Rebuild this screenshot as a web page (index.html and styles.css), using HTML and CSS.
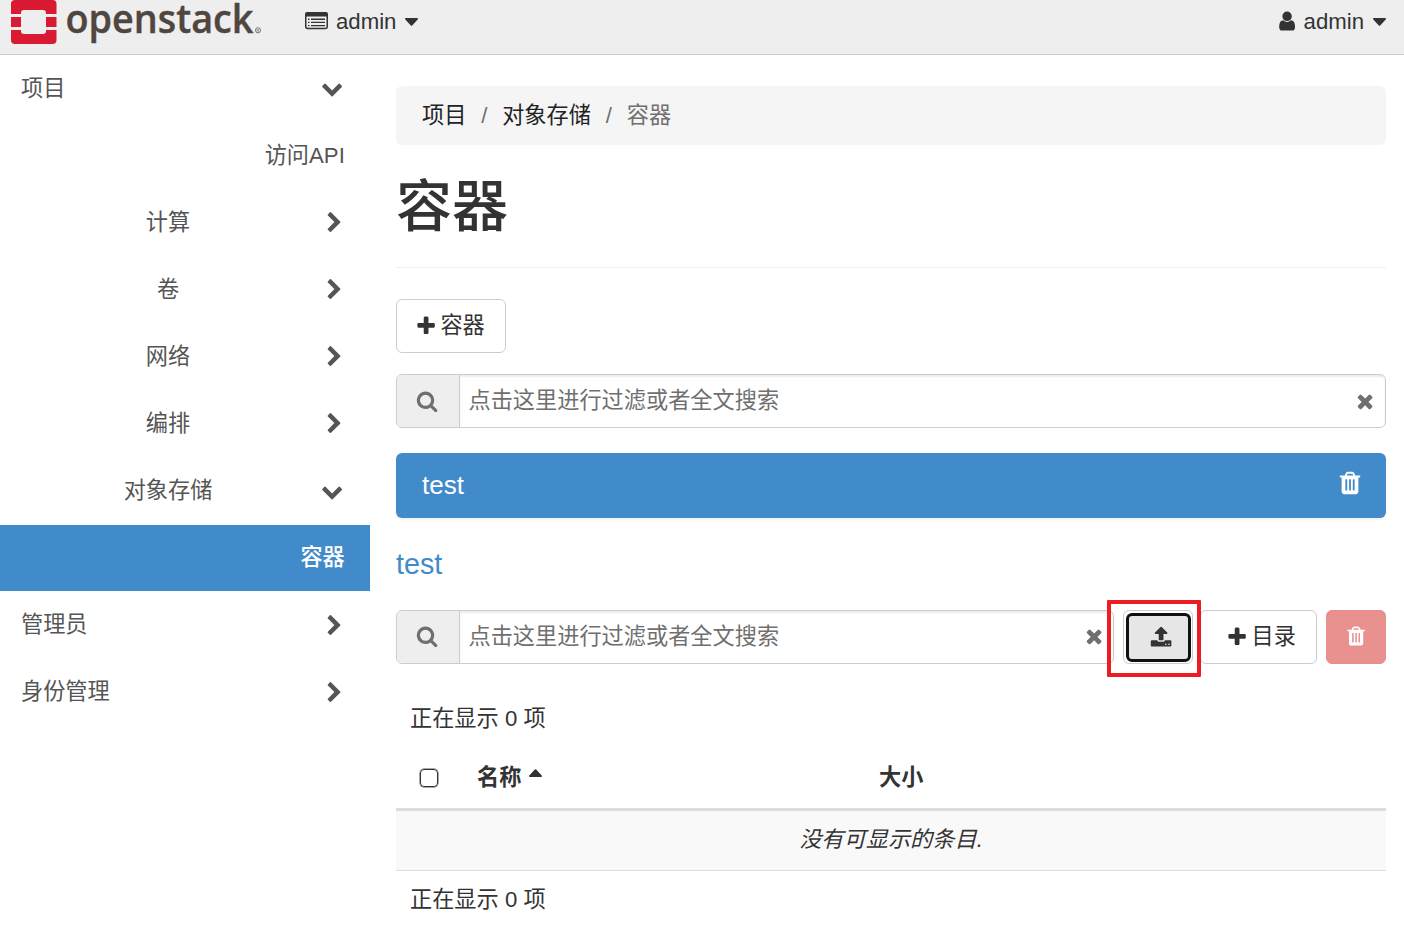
FILE: index.html
```html
<!DOCTYPE html>
<html lang="zh-CN">
<head>
<meta charset="utf-8">
<title>容器 - OpenStack Dashboard</title>
<link rel="stylesheet" href="styles.css">
</head>
<body>
<svg class="defs" width="0" height="0">
  <symbol id="search" viewBox="0 0 1792 1792"><path d="M1216 832q0-185-131.500-316.500t-316.500-131.500-316.500 131.500-131.500 316.500 131.500 316.500 316.500 131.500 316.500-131.500 131.500-316.500zm512 832q0 52-38 90t-90 38q-54 0-90-38l-343-342q-179 124-399 124-143 0-273.500-55.500t-225-150-150-225-55.500-273.500 55.500-273.500 150-225 225-150 273.500-55.500 273.500 55.500 225 150 150 225 55.500 273.500q0 220-124 399l343 343q37 37 37 90z"/></symbol>
  <symbol id="plus" viewBox="0 0 1792 1792"><path d="M1600 736v192q0 40-28 68t-68 28h-416v416q0 40-28 68t-68 28h-192q-40 0-68-28t-28-68v-416h-416q-40 0-68-28t-28-68v-192q0-40 28-68t68-28h416v-416q0-40 28-68t68-28h192q40 0 68 28t28 68v416h416q40 0 68 28t28 68z"/></symbol>
  <symbol id="times" viewBox="0 0 1792 1792"><path d="M1490 1322q0 40-28 68l-136 136q-28 28-68 28t-68-28l-294-294-294 294q-28 28-68 28t-68-28l-136-136q-28-28-28-68t28-68l294-294-294-294q-28-28-28-68t28-68l136-136q28-28 68-28t68 28l294 294 294-294q28-28 68-28t68 28l136 136q28 28 28 68t-28 68l-294 294 294 294q28 28 28 68z"/></symbol>
  <symbol id="trash" viewBox="0 0 1792 1792"><path d="M704 1376v-704q0-14-9-23t-23-9h-64q-14 0-23 9t-9 23v704q0 14 9 23t23 9h64q14 0 23-9t9-23zm256 0v-704q0-14-9-23t-23-9h-64q-14 0-23 9t-9 23v704q0 14 9 23t23 9h64q14 0 23-9t9-23zm256 0v-704q0-14-9-23t-23-9h-64q-14 0-23 9t-9 23v704q0 14 9 23t23 9h64q14 0 23-9t9-23zm-544-992h448l-48-117q-7-9-17-11h-317q-10 2-17 11zm928 32v64q0 14-9 23t-23 9h-96v948q0 83-47 143.500t-113 60.500h-832q-66 0-113-58.500t-47-141.500v-952h-96q-14 0-23-9t-9-23v-64q0-14 9-23t23-9h309l70-167q15-37 54-63t79-26h320q40 0 79 26t54 63l70 167h309q14 0 23 9t9 23z"/></symbol>
  <symbol id="chevron" viewBox="0 0 1792 1792"><path d="M1683 808l-742 741q-19 19-45 19t-45-19l-742-741q-19-19-19-45.500t19-45.500l166-165q19-19 45-19t45 19l531 531 531-531q19-19 45-19t45 19l166 165q19 19 19 45.500t-19 45.500z"/></symbol>
  <symbol id="upload" viewBox="0 0 1792 1792"><path d="M1344 1472q0-26-19-45t-45-19-45 19-19 45 19 45 45 19 45-19 19-45zm256 0q0-26-19-45t-45-19-45 19-19 45 19 45 45 19 45-19 19-45zm128-224v320q0 40-28 68t-68 28h-1472q-40 0-68-28t-28-68v-320q0-40 28-68t68-28h427q21 56 70.500 92t110.500 36h256q61 0 110.500-36t70.500-92h427q40 0 68 28t28 68zm-325-648q-17 40-59 40h-256v448q0 26-19 45t-45 19h-256q-26 0-45-19t-19-45v-448h-256q-42 0-59-40-17-39 14-69l448-448q18-19 45-19t45 19l448 448q31 30 14 69z"/></symbol>
  <symbol id="user" viewBox="0 0 1792 1792"><path d="M1536 1399q0 109-62.500 187t-150.500 78h-854q-88 0-150.500-78t-62.500-187q0-85 8.500-160.500t31.500-152 58.500-131 94-89 134.500-34.500q131 128 313 128t313-128q76 0 134.500 34.500t94 89 58.500 131 31.500 152 8.500 160.500zm-256-887q0 159-112.500 271.500t-271.500 112.500-271.500-112.500-112.500-271.500 112.500-271.500 271.500-112.500 271.500 112.500 112.500 271.500z"/></symbol>
  <symbol id="caret" viewBox="0 0 13 8"><path d="M.9 0h11.200q.8 0 .9.700 0 .500-.3.800L7.200 7.500q-.7.600-1.400 0L.3 1.500Q0 1.200 0 .700.1 0 .9 0z"/></symbol>
</svg>

<header class="navbar">
  <svg class="brand" width="266" height="50" viewBox="0 0 266 50">
    <path fill="#da1a32" d="M11 14V4q0-4 4-4h37.500q4 0 4 4v10H46v-1q0-3-3-3H24q-3 0-3 3v1zM11 17h10v10H11zM46 17h10.500v10H46zM11 30h10v1q0 3 3 3h19q3 0 3-3v-1h10.500v10q0 4-4 4H15q-4 0-4-4z"/>
    <text class="brand-name" x="65.500" y="32.800" textLength="188" lengthAdjust="spacingAndGlyphs">openstack</text>
    <circle cx="258" cy="30.300" r="2.600" fill="none" stroke="#4f463f" stroke-width=".7"/>
    <text class="brand-mark" x="256.600" y="32">R</text>
  </svg>
  <div class="context">
    <svg class="list-icon" width="23" height="18" viewBox="0 0 23 18"><path fill="none" stroke="#333" stroke-width="1.500" d="M.75 3v11.500q0 2 2 2h17.500q2 0 2-2V3"/><path fill="#333" d="M0 4.500V2q0-2 2-2h19q2 0 2 2v2.500z"/><path stroke="#333" stroke-width="1.400" d="M3 7.200h1.500M6 7.200h14M3 10.400h1.500M6 10.400h14M3 13.600h1.500M6 13.600h14"/></svg>
    <span>admin</span>
    <svg class="caret"><use href="#caret"/></svg>
  </div>
  <div class="account">
    <svg class="icon"><use href="#user"/></svg>
    <span>admin</span>
    <svg class="caret"><use href="#caret"/></svg>
  </div>
</header>

<div class="layout">
  <nav class="sidebar">
    <a class="item">项目<svg class="icon"><use href="#chevron"/></svg></a>
    <a class="item leaf">访问API</a>
    <a class="item group"><span>计算</span><svg class="icon right"><use href="#chevron"/></svg></a>
    <a class="item group"><span>卷</span><svg class="icon right"><use href="#chevron"/></svg></a>
    <a class="item group"><span>网络</span><svg class="icon right"><use href="#chevron"/></svg></a>
    <a class="item group"><span>编排</span><svg class="icon right"><use href="#chevron"/></svg></a>
    <a class="item group"><span>对象存储</span><svg class="icon"><use href="#chevron"/></svg></a>
    <a class="item leaf active">容器</a>
    <a class="item">管理员<svg class="icon right"><use href="#chevron"/></svg></a>
    <a class="item">身份管理<svg class="icon right"><use href="#chevron"/></svg></a>
  </nav>

  <main class="content">
    <div class="breadcrumb"><a>项目</a><i>/</i><a>对象存储</a><i>/</i><span>容器</span></div>
    <h1 class="title">容器</h1>
    <button class="btn create"><svg class="icon"><use href="#plus"/></svg>容器</button>
    <div class="search">
      <span class="addon"><svg class="icon"><use href="#search"/></svg></span>
      <span class="field">点击这里进行过滤或者全文搜索<svg class="icon"><use href="#times"/></svg></span>
    </div>
    <div class="container-row"><span>test</span><svg class="icon large"><use href="#trash"/></svg></div>
    <h3 class="path">test</h3>
    <div class="toolbar">
      <div class="search">
        <span class="addon"><svg class="icon"><use href="#search"/></svg></span>
        <span class="field">点击这里进行过滤或者全文搜索<svg class="icon"><use href="#times"/></svg></span>
      </div>
      <button class="btn upload"><span class="focus"><svg class="icon"><use href="#upload"/></svg></span><span class="highlight"></span></button>
      <button class="btn folder"><svg class="icon"><use href="#plus"/></svg>目录</button>
      <button class="btn danger"><svg class="icon"><use href="#trash"/></svg></button>
    </div>
    <div class="count">正在显示 0 项</div>
    <div class="thead">
      <span class="checkbox"></span>
      <span class="name">名称<svg class="caret up"><use href="#caret"/></svg></span>
      <span>大小</span>
    </div>
    <div class="empty">没有可显示的条目.</div>
    <div class="count foot">正在显示 0 项</div>
  </main>
</div>
</body>
</html>
```
FILE: styles.css
```css
* { box-sizing: border-box; }
body {
  margin: 0;
  height: 937px;
  overflow: hidden;
  background: #fff;
  color: #333;
  font: 22.2px/32px "Liberation Sans", "Noto Sans CJK SC", sans-serif;
}
.defs { position: absolute; }
.icon { width: 22.2px; height: 22.2px; fill: currentColor; flex: none; }
.icon.large { width: 26px; height: 26px; }
.icon.right { transform: rotate(-90deg); }
.caret { width: 13px; height: 8px; fill: #333; flex: none; }
.caret.up { transform: rotate(180deg); }

.navbar {
  display: flex;
  height: 55px;
  background: #eee;
  border-bottom: 1px solid #ccc;
}
.brand { flex: none; overflow: visible; }
.brand-name { font: 600 40px "Open Sans", sans-serif; fill: #4f463f; stroke: #4f463f; stroke-width: .4px; }
.brand-mark { font: 4px "Liberation Sans", sans-serif; fill: #4f463f; }
.context, .account { display: flex; align-items: center; height: 43px; }
.context { margin-left: 39px; }
.list-icon { margin: -1px 8px 0 0; }
.context .caret, .account .caret { margin-left: 9px; }
.account { margin: 0 18px 0 auto; }
.account .icon { margin: 0 5px 0 0; }

.layout { display: flex; }
.sidebar { width: 370px; flex: none; }
.item {
  display: flex;
  align-items: center;
  justify-content: space-between;
  height: 66px;
  margin-bottom: 1.1px;
  padding: 1px 27px 0 21px;
  color: #555;
}
.item .icon { margin-top: 0; }
.item .icon.right { margin-top: -1px; }
.item.leaf { justify-content: flex-end; padding-right: 25.200px; }
.item.group { padding-left: 0; }
.item.group span { width: 336px; flex: none; text-align: center; }
.item.group .icon { margin-left: -15.200px; margin-right: 0; }
.item.group { justify-content: flex-start; }
.item.active { background: #428bca; color: #fff; font-weight: 500; }

.content { width: 990px; margin: 31px 0 0 26px; }
.breadcrumb {
  display: flex;
  align-items: center;
  height: 59px;
  padding: 0 26px;
  background: #f5f5f5;
  border-radius: 6px;
  color: #6f6f6f;
}
.breadcrumb a { color: #222; }
.breadcrumb i { width: 35.800px; text-align: center; font-style: normal; }
.title {
  margin: 0 0 31px;
  height: 123px;
  padding-top: 30px;
  border-bottom: 1px solid #eee;
  font-size: 56px;
  font-weight: 500;
  line-height: 64px;
}
.btn {
  display: flex;
  align-items: center;
  justify-content: center;
  height: 54px;
  padding: 0;
  border: 1px solid #ccc;
  border-radius: 6px;
  background: #fff;
  color: #333;
  font: inherit;
}
.btn .icon { margin: 0 3px 0 0; }
.create { width: 110px; padding-right: 2px; }
.create + .search { margin-top: 21px; }
.search {
  display: flex;
  height: 54px;
  border: 1px solid #ccc;
  border-radius: 6px;
  overflow: hidden;
  color: #6f6f6f;
}
.addon {
  display: flex;
  align-items: center;
  justify-content: center;
  width: 63px;
  background: #eee;
  border-right: 1px solid #ccc;
}
.field {
  display: flex;
  flex: 1;
  align-items: center;
  justify-content: space-between;
  padding: 0 8.500px 0 8.500px;
  box-shadow: inset 0 2px 2px rgba(0, 0, 0, .075);
}
.addon .icon { margin-right: 1px; }
.container-row {
  display: flex;
  align-items: center;
  justify-content: space-between;
  height: 65px;
  margin-top: 25px;
  padding: 0 23px 1px 26px;
  border-radius: 6px;
  background: #428bca;
  box-shadow: 0 2px 2px rgba(0, 0, 0, .05);
  color: #fff;
  font-size: 26px;
}
.container-row .icon { margin-top: -4px; }
.path { margin: 30px 0 30px; color: #428bca; font-size: 28.700px; font-weight: 400; line-height: 32px; }
.toolbar { display: flex; }
.toolbar .search { width: 719px; }
.toolbar .search .icon { margin-top: -1px; }
.upload { position: relative; width: 70px; margin-left: 9px; padding: 0 0 0 1px; }
.focus {
  display: flex;
  align-items: center;
  justify-content: center;
  width: 65px;
  height: 49px;
  border: 3px solid #111;
  border-radius: 6px;
  background: #e6e6e6;
}
.upload .icon { margin: 0 0 0 4px; }
.highlight {
  position: absolute;
  inset: -11px -9px -14px -17px;
  z-index: 1;
  border: 4px solid #ed1c24;
  border-radius: 1px;
}
.folder { width: 117px; margin-left: 7px; padding-left: 5px; }
.danger { width: 60px; margin-left: 9px; border-color: #e58f8c; background: #e8918e; color: #fff; }
.danger .icon { margin: -1px 0 0; }
.count { margin-top: 39px; padding-left: 14px; }
.thead {
  display: grid;
  grid-template-columns: 57px 402px 1fr;
  align-items: center;
  height: 76px;
  padding: 12px 0 0 24px;
  border-bottom: 3px solid #ddd;
  font-weight: 700;
}
.checkbox { width: 18px; height: 18px; margin-top: 1px; border: 1.5px solid #333; border-radius: 4px; box-shadow: 0 0 0 .5px #555; }
.name { display: flex; align-items: center; }
.name .caret { margin: -10px 0 0 8px; }
.empty {
  height: 60px;
  border-bottom: 1px solid #ddd;
  background: #f9f9f9;
  font-style: italic;
  line-height: 58px;
  text-align: center;
}
.count.foot { margin-top: 13px; }
```
